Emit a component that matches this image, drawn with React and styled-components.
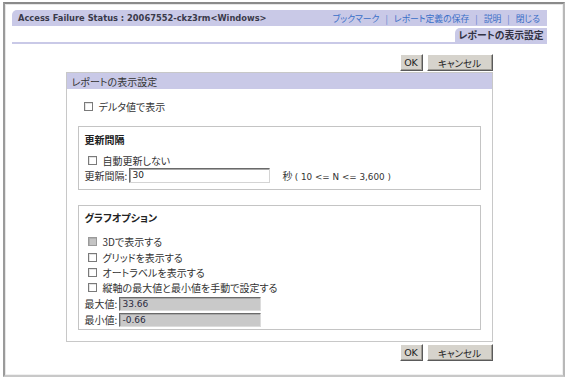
import React from "react";
import styled, { createGlobalStyle } from "styled-components";

const Global = createGlobalStyle`
  html, body { margin: 0; padding: 0; background: #ffffff; }
  body {
    font-family: "Noto Sans CJK JP", "DejaVu Sans", sans-serif;
    font-size: 10px;
    color: #333333;
  }
`;

const JP = `"Noto Sans CJK JP", "DejaVu Sans", sans-serif`;
const LAT = `"DejaVu Sans", "Noto Sans CJK JP", sans-serif`;
const LAV = "#c9c9e7";

const Frame = styled.div`
  box-sizing: border-box;
  margin: 2px 4px 0 3px;
  width: 562px;
  height: 375px;
  border-top: 2px solid #8a8a8a;
  border-left: 2px solid #9a9a9a;
  border-right: 2px solid #b8b8b8;
  border-bottom: 2px solid #c8c8c8;
  box-shadow: inset 1px 1px 0 #e6e6e6, inset -1px -1px 0 #f0f0f0;
  padding: 6px 16px 0 7px;
  display: flex;
  flex-direction: column;
`;

const TopBar = styled.div`
  height: 16px;
  background: ${LAV};
  border-top-left-radius: 5px;
  display: flex;
  align-items: center;
  justify-content: space-between;
  padding: 0 7px 0 6px;
`;

const Title = styled.div`
  font-family: ${LAT};
  font-weight: bold;
  font-size: 8.3px;
  color: #3a3a4a;
  white-space: nowrap;
`;

const Links = styled.div`
  display: flex;
  align-items: center;
  gap: 6px;
  font-family: ${JP};
  font-size: 8.8px;
  color: #3a6fc8;
  font-feature-settings: "palt";
  white-space: nowrap;
`;

const Sep = styled.span`
  color: #5b7fd0;
`;

const TabRow = styled.div`
  margin-top: 2px;
  display: flex;
  justify-content: flex-end;
  border-bottom: 2px solid ${LAV};
`;

const Tab = styled.div`
  height: 14px;
  width: 92px;
  box-sizing: border-box;
  background: ${LAV};
  border-top-left-radius: 5px;
  display: flex;
  align-items: center;
  justify-content: center;
  font-family: ${JP};
  font-weight: bold;
  font-size: 9.8px;
  color: #333344;
  font-feature-settings: "palt";
`;

const Main = styled.div`
  width: 427px;
  align-self: center;
  margin-left: -1px;
  display: flex;
  flex-direction: column;
`;

const ButtonRow = styled.div`
  display: flex;
  justify-content: flex-end;
  gap: 4px;
  margin-top: ${(p) => p.$top}px;
`;

const Button = styled.div`
  box-sizing: border-box;
  height: 17px;
  width: ${(p) => p.$w}px;
  background: #d6d3cc;
  border-top: 1px solid #ffffff;
  border-left: 1px solid #ffffff;
  border-right: 1px solid #5a5a5a;
  border-bottom: 1px solid #5a5a5a;
  box-shadow: inset -1px -1px 0 #a09d96;
  display: flex;
  align-items: center;
  justify-content: center;
  font-family: ${(p) => (p.$latin ? LAT : JP)};
  font-size: 9.5px;
  color: #222;
  font-feature-settings: "palt";
`;

const Panel = styled.div`
  margin-top: 1px;
  box-sizing: border-box;
  height: 270px;
  border: 1px solid #c8c8c8;
  display: flex;
  flex-direction: column;
`;

const PanelHeader = styled.div`
  height: 16px;
  background: ${LAV};
  display: flex;
  align-items: center;
  padding-left: 5px;
  font-size: 10px;
  color: #333;
  font-feature-settings: "palt";
`;

const PanelBody = styled.div`
  padding: 10px 11px 0 11px;
  display: flex;
  flex-direction: column;
`;

const Group = styled.div`
  box-sizing: border-box;
  margin-top: ${(p) => p.$top}px;
  height: ${(p) => p.$h}px;
  border: 1px solid #c4c4c4;
  padding: ${(p) => p.$pt}px 6px 0 6px;
  display: flex;
  flex-direction: column;
`;

const GroupTitle = styled.div`
  height: 14px;
  display: flex;
  align-items: center;
  font-weight: bold;
  font-size: 10px;
  color: #222;
  font-feature-settings: "palt";
  margin-bottom: ${(p) => p.$mb}px;
`;

const CheckRow = styled.div`
  height: ${(p) => p.$h || 15}px;
  display: flex;
  align-items: center;
  padding-left: ${(p) => p.$pl || 3}px;
  gap: 6px;
  font-size: 10px;
  color: #333;
  font-feature-settings: "palt";
`;

const Box = styled.span`
  box-sizing: border-box;
  width: 9px;
  height: 9px;
  flex: none;
  background: ${(p) => (p.$disabled ? "#c4c4c4" : "#ffffff")};
  border: 1px solid ${(p) => (p.$disabled ? "#9a9a9a" : "#7a7a7a")};
  box-shadow: inset 1px 1px 0 ${(p) => (p.$disabled ? "#b0b0b0" : "#e4e4e4")};
`;

const FieldRow = styled.div`
  height: ${(p) => p.$h || 16}px;
  display: flex;
  align-items: center;
  font-size: 10px;
  color: #333;
  font-feature-settings: "palt";
`;

const Label = styled.span`
  width: ${(p) => p.$w}px;
  flex: none;
  white-space: nowrap;
`;

const Input = styled.div`
  box-sizing: border-box;
  width: ${(p) => p.$w}px;
  height: ${(p) => p.$h}px;
  background: ${(p) => (p.$disabled ? "#c9c9c9" : "#ffffff")};
  border-top: 1px solid #6a6a6a;
  border-left: 1px solid #6a6a6a;
  border-right: 1px solid ${(p) => (p.$disabled ? "#dcdcdc" : "#d4d4d4")};
  border-bottom: 1px solid ${(p) => (p.$disabled ? "#dcdcdc" : "#d4d4d4")};
  box-shadow: inset 1px 1px 0 #a8a8a8;
  display: flex;
  align-items: center;
  padding-left: 3px;
  font-family: ${LAT};
  font-size: 9px;
  color: ${(p) => (p.$disabled ? "#2a2a40" : "#222")};
`;

const Hint = styled.span`
  margin-left: 13px;
  white-space: nowrap;
  font-size: 10px;
`;

const HintNum = styled.span`
  font-family: ${LAT};
  font-size: 8.8px;
  color: #333;
`;

export default function App() {
  const graphOptions = [
    { label: "3Dで表示する", disabled: true },
    { label: "グリッドを表示する" },
    { label: "オートラベルを表示する" },
    { label: "縦軸の最大値と最小値を手動で設定する" },
  ];
  return (
    <>
      <Global />
      <Frame>
        <TopBar>
          <Title>Access Failure Status : 20067552-ckz3rm&lt;Windows&gt;</Title>
          <Links>
            <span>ブックマーク</span>
            <Sep>|</Sep>
            <span>レポート定義の保存</span>
            <Sep>|</Sep>
            <span>説明</span>
            <Sep>|</Sep>
            <span>閉じる</span>
          </Links>
        </TopBar>
        <TabRow>
          <Tab>レポートの表示設定</Tab>
        </TabRow>
        <Main>
          <ButtonRow $top={10}>
            <Button $w={23} $latin>OK</Button>
            <Button $w={66}>キャンセル</Button>
          </ButtonRow>
          <Panel>
            <PanelHeader>レポートの表示設定</PanelHeader>
            <PanelBody>
              <CheckRow $h={14} $pl={6}>
                <Box />
                デルタ値で表示
              </CheckRow>
              <Group $top={13} $h={64} $pt={5}>
                <GroupTitle $mb={7}>更新間隔</GroupTitle>
                <CheckRow $h={14}>
                  <Box />
                  自動更新しない
                </CheckRow>
                <FieldRow $h={16}>
                  <Label $w={44}>更新間隔:</Label>
                  <Input $w={141} $h={15}>30</Input>
                  <Hint>
                    秒 <HintNum>( 10 &lt;= N &lt;= 3,600 )</HintNum>
                  </Hint>
                </FieldRow>
              </Group>
              <Group $top={15} $h={125} $pt={4}>
                <GroupTitle $mb={10}>グラフオプション</GroupTitle>
                {graphOptions.map((o) => (
                  <CheckRow key={o.label} $h={15.4}>
                    <Box $disabled={o.disabled} />
                    {o.label}
                  </CheckRow>
                ))}
                <FieldRow $h={16}>
                  <Label $w={34}>最大値:</Label>
                  <Input $w={142} $h={14} $disabled>33.66</Input>
                </FieldRow>
                <FieldRow $h={16}>
                  <Label $w={34}>最小値:</Label>
                  <Input $w={142} $h={14} $disabled>-0.66</Input>
                </FieldRow>
              </Group>
            </PanelBody>
          </Panel>
          <ButtonRow $top={2}>
            <Button $w={23} $latin>OK</Button>
            <Button $w={66}>キャンセル</Button>
          </ButtonRow>
        </Main>
      </Frame>
    </>
  );
}
